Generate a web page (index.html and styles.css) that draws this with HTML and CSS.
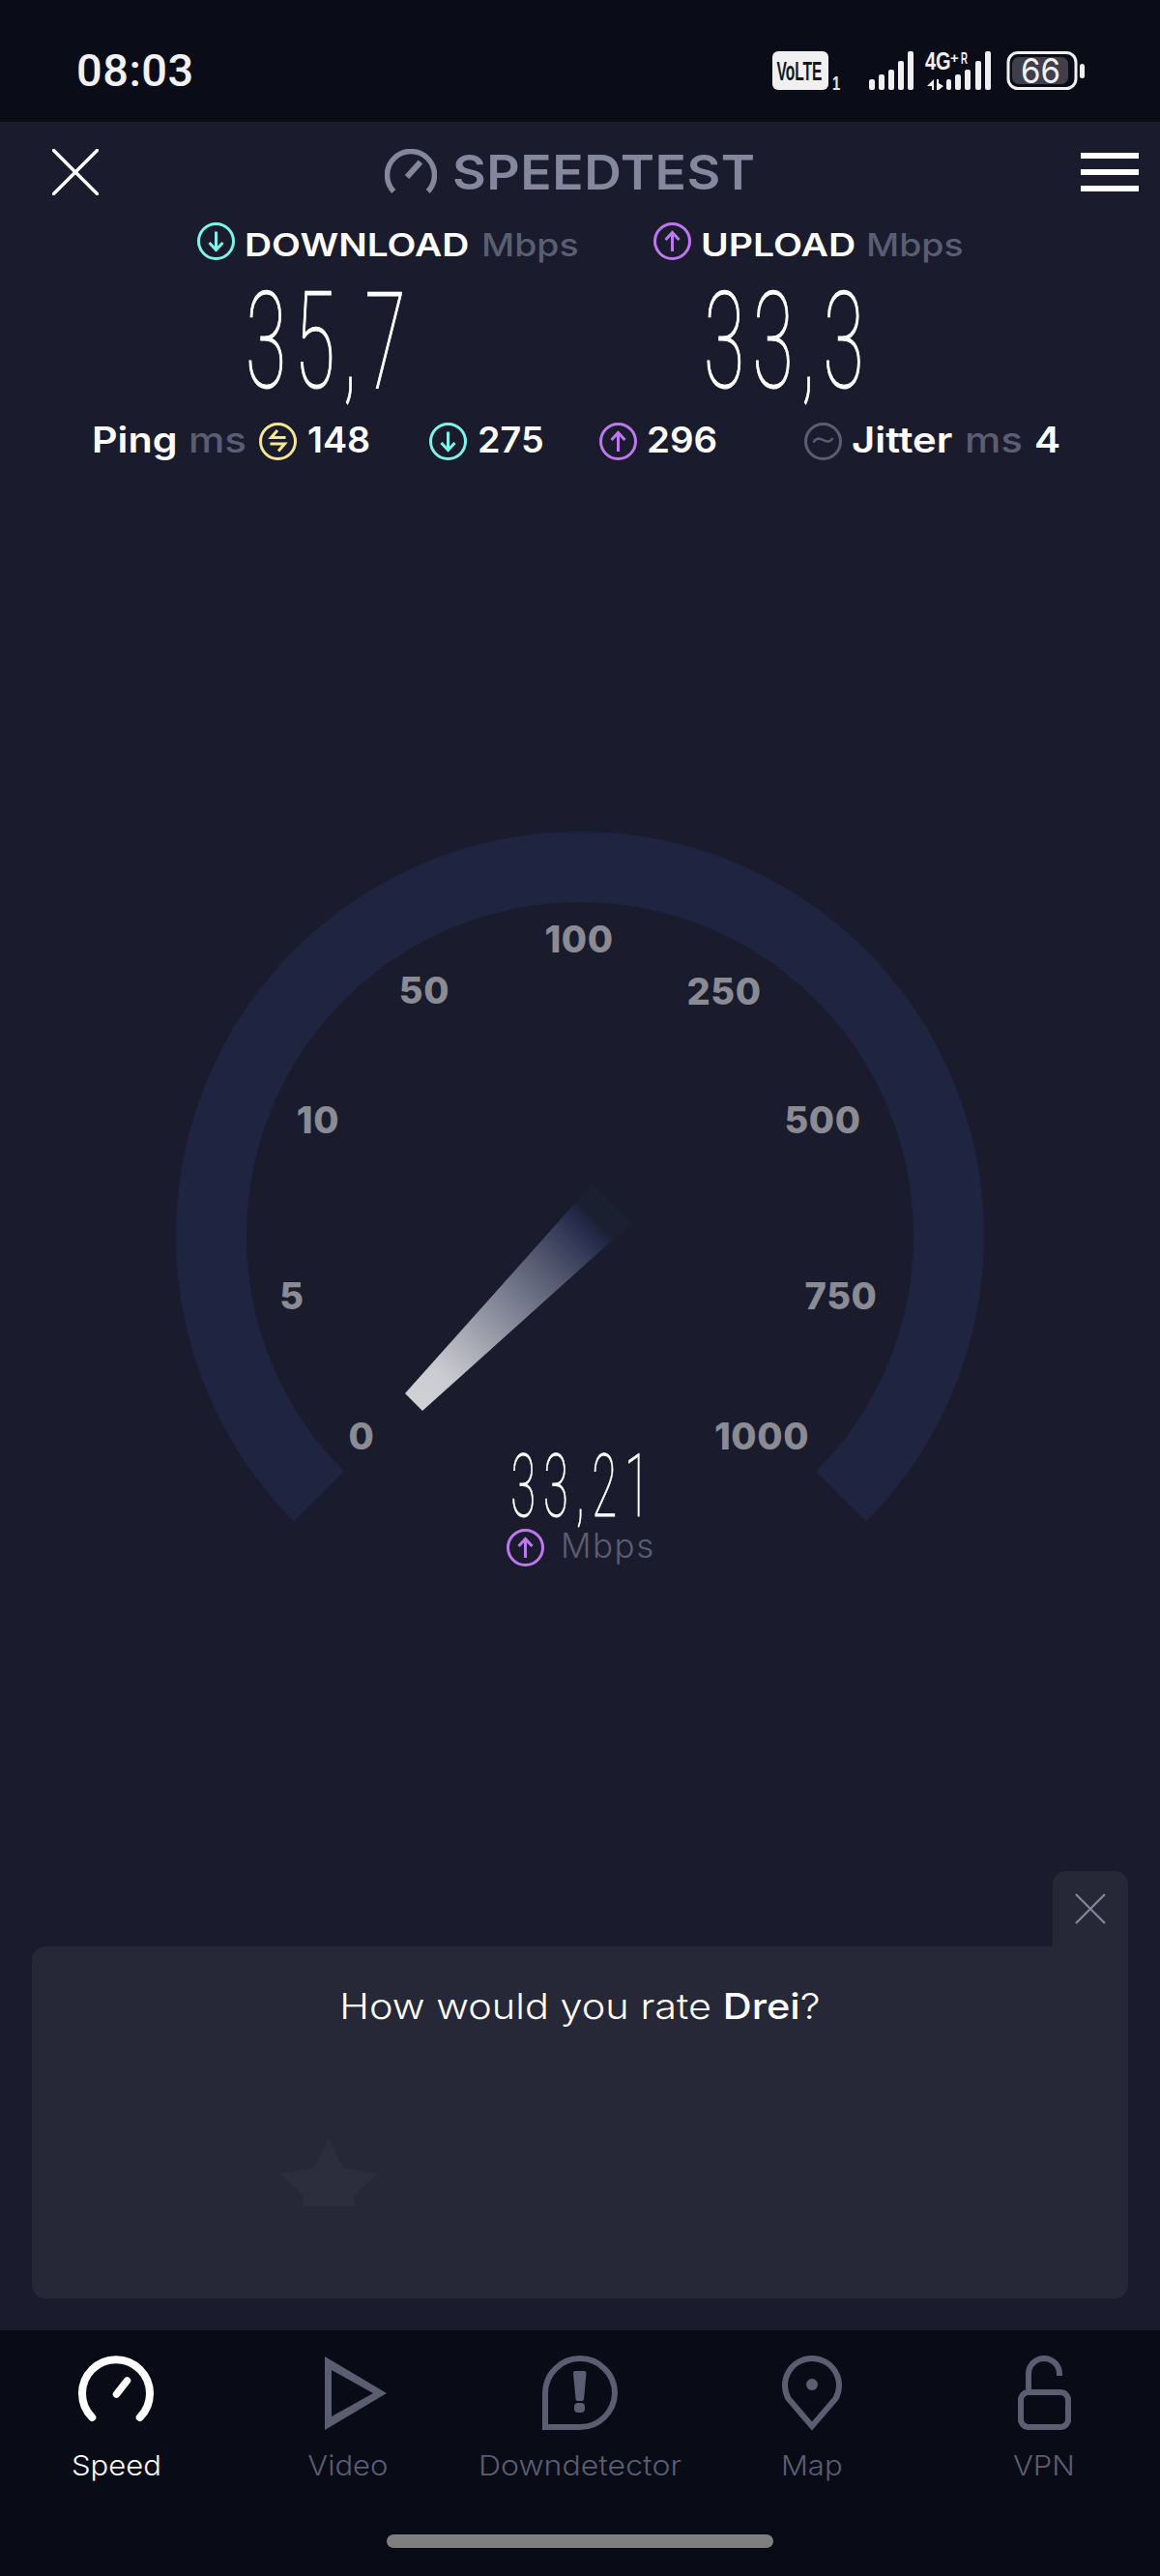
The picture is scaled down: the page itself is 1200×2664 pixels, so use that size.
FILE: index.html
```html
<!DOCTYPE html>
<html lang="en">
<head>
<meta charset="utf-8">
<title>Speedtest</title>
<link rel="stylesheet" href="styles.css">
</head>
<body>
<svg class="defs" width="0" height="0" aria-hidden="true">
  <symbol id="ring-down" viewBox="0 0 39 39"><circle cx="19.5" cy="19.5" r="18" fill="none" stroke="currentColor" stroke-width="3"/><path d="M19.5 9.5V28M12.5 21l7 7.5 7-7.5" fill="none" stroke="currentColor" stroke-width="3"/></symbol>
  <symbol id="ring-up" viewBox="0 0 39 39"><circle cx="19.5" cy="19.5" r="18" fill="none" stroke="currentColor" stroke-width="3"/><path d="M19.5 30V11M12.5 18l7-7.5 7 7.5" fill="none" stroke="currentColor" stroke-width="3"/></symbol>
  <symbol id="ring-ping" viewBox="0 0 39 39"><circle cx="19.5" cy="19.5" r="18" fill="none" stroke="currentColor" stroke-width="3"/><path d="M27.500 15.500H12.500L19 8M11.500 22H26.500L20 29.500" fill="none" stroke="currentColor" stroke-width="3"/></symbol>
  <symbol id="ring-jitter" viewBox="0 0 39 39"><circle cx="19.5" cy="19.5" r="18" fill="none" stroke="currentColor" stroke-width="3"/><path d="M9.500 20.500c2-4 6-5 10-2.500s8 2 10-2" fill="none" stroke="currentColor" stroke-width="2.500"/></symbol>
</svg>
<div class="screen">
  <header class="status">
    <span class="time">08:03</span>
    <div class="status-icons">
      <svg class="si-volte" width="72" height="64" viewBox="799 41 72 64">
        <rect x="799" y="53" width="58" height="40" rx="6" fill="#f0f0f2"/>
        <text class="volte-text" transform="translate(803.500 83) scale(.555 1)">VoLTE</text>
        <text class="sim-text" transform="translate(861 93) scale(.7 1)">1</text>
      </svg>
      <svg class="si-signal" width="46" height="64" viewBox="899 41 46 64">
        <rect x="899" y="82" width="6" height="11" rx="2" /><rect x="909" y="77" width="6" height="16" rx="2"/><rect x="919" y="72" width="6" height="21" rx="2"/><rect x="929" y="63" width="6" height="30" rx="2"/><rect x="939" y="53" width="6" height="40" rx="2"/>
      </svg>
      <svg class="si-signal2" width="70" height="64" viewBox="956 41 70 64">
        <text class="net-text" transform="translate(957 72) scale(.8 1)">4G</text>
        <text class="net-plus" x="983" y="65">+</text>
        <text class="net-small" transform="translate(994 66) scale(.6 1)">R</text>
        <path d="M966 82v11h-2v-4h-5zM969 82h2v4l5 3-5 4h-2z" fill="#f0f0f2"/>
        <rect x="979" y="82" width="5" height="11" rx="2"/><rect x="988" y="77" width="6" height="16" rx="2"/><rect x="998" y="72" width="6" height="21" rx="2"/><rect x="1009" y="63" width="6" height="30" rx="2"/><rect x="1019" y="53" width="6" height="40" rx="2"/>
      </svg>
      <svg class="si-batt" width="81" height="64" viewBox="1041 41 81 64">
        <rect x="1043" y="54.500" width="70" height="37" rx="10" fill="none" stroke="#f0f0f2" stroke-width="3"/>
        <rect x="1047" y="59" width="58" height="28" rx="7" fill="#3e3f4b"/>
        <text class="batt-text" transform="translate(1056 86) scale(.92 1)">66</text>
        <rect x="1117" y="66" width="5" height="15" rx="2.500" fill="#f0f0f2"/>
      </svg>
    </div>
  </header>

  <main class="main">
    <div class="topbar">
      <svg class="close-icon" width="48" height="48" viewBox="0 0 48 48"><path d="M1.500 1.500L46.500 46.500M46.500 1.500L1.500 46.500" stroke="#fff" stroke-width="3.400" stroke-linecap="round"/></svg>
      <div class="brand">
        <svg width="54" height="48" viewBox="0 0 54 48"><path d="M9.300 44A24.500 24.500 0 1 1 44.700 44" fill="none" stroke="#85889c" stroke-width="5.500"/><path d="M23 29L37 13.500" stroke="#85889c" stroke-width="6"/></svg>
        <span class="sx brand-name">SPEEDTEST</span>
      </div>
      <div class="burger"><i></i><i></i><i></i></div>
    </div>

    <div class="readouts">
      <section class="readout readout-down">
        <div class="readout-label"><svg class="ring cyan"><use href="#ring-down"/></svg><b class="sx w-download">DOWNLOAD</b><span class="sx unit w-unit">Mbps</span></div>
        <div class="big big-down">35,7</div>
      </section>
      <section class="readout readout-up">
        <div class="readout-label"><svg class="ring purple"><use href="#ring-up"/></svg><b class="sx w-upload">UPLOAD</b><span class="sx unit w-unit">Mbps</span></div>
        <div class="big big-up">33,3</div>
      </section>
    </div>

    <div class="stats">
      <div class="stat stat-ping"><b class="sx w-ping">Ping</b><span class="sx unit w-ms">ms</span><svg class="ring yellow"><use href="#ring-ping"/></svg><b class="sx w-148">148</b></div>
      <div class="stat stat-dl"><svg class="ring cyan"><use href="#ring-down"/></svg><b class="sx w-275">275</b></div>
      <div class="stat stat-ul"><svg class="ring purple"><use href="#ring-up"/></svg><b class="sx w-296">296</b></div>
      <div class="stat stat-jitter"><svg class="ring gray"><use href="#ring-jitter"/></svg><b class="sx w-jitter">Jitter</b><span class="sx unit w-ms">ms</span><b class="sx w-four">4</b></div>
    </div>

    <svg class="gauge" width="1200" height="790" viewBox="0 850 1200 790">
      <defs>
        <linearGradient id="needle" gradientUnits="userSpaceOnUse" x1="428" y1="1450" x2="633" y2="1245">
          <stop offset="0" stop-color="#d0d1d5"/>
          <stop offset="0.14" stop-color="#cbccd1"/>
          <stop offset="0.45" stop-color="#868999"/>
          <stop offset="0.7" stop-color="#4e536b"/>
          <stop offset="0.86" stop-color="#262d4d"/>
          <stop offset="0.9" stop-color="#1f2540"/>
          <stop offset="0.915" stop-color="#1a2030"/>
          <stop offset="1" stop-color="#1a2030"/>
        </linearGradient>
      </defs>
      <path d="M330.200 1547.800A381.500 381.500 0 1 1 869.800 1547.800" fill="none" stroke="#1f2540" stroke-width="73"/>
      <polygon points="419,1441 437,1459 653,1265 613,1224" fill="url(#needle)"/>
      <g class="tick">
        <text x="374" y="1499">0</text>
        <text x="302" y="1354">5</text>
        <text x="329" y="1172">10</text>
        <text x="439" y="1038">50</text>
        <text x="599" y="985">100</text>
        <text x="749" y="1039">250</text>
        <text x="851" y="1172">500</text>
        <text x="870" y="1354">750</text>
        <text x="788" y="1499">1000</text>
      </g>
      <text class="needle-value" transform="translate(604 1568) scale(.52 1)">33,21</text>
      <use href="#ring-up" class="purple" x="524" y="1581" width="39" height="39"/>
      <text class="needle-unit" x="580" y="1611">Mbps</text>
    </svg>

    <div class="rate-wrap">
      <div class="rate-tab">
        <svg width="32" height="32" viewBox="0 0 32 32"><path d="M1 1L31 31M31 1L1 31" stroke="#85889c" stroke-width="2.200"/></svg>
      </div>
      <section class="rate-card">
        <h2 class="rate-title"><span class="rate-text">How would you rate <b>Drei</b>?</span></h2>
        <svg class="star" width="102" height="72" viewBox="289 2209 102 72"><polygon points="340,2210 355,2240.700 390.700,2246.700 366,2270 367.300,2280.700 312.700,2280.700 314.300,2270 289.300,2246.700 325,2240.700" fill="#2c2e3d"/></svg>
      </section>
    </div>
  </main>

  <nav class="nav">
    <div class="tabs">
      <div class="tab tab-active">
        <svg width="80" height="78" viewBox="0 0 80 78"><path d="M15.300 64A35 35 0 1 1 64.700 64" fill="none" stroke="currentColor" stroke-width="8" stroke-linecap="round"/><path d="M40.500 40L51.500 26" stroke="currentColor" stroke-width="7.500" stroke-linecap="round"/></svg>
        <span>Speed</span>
      </div>
      <div class="tab">
        <svg width="80" height="78" viewBox="0 0 80 78"><path fill-rule="evenodd" fill="currentColor" d="M16 1L80 39L16 77ZM23 15V63L66 39Z"/></svg>
        <span>Video</span>
      </div>
      <div class="tab">
        <svg width="80" height="78" viewBox="0 0 80 78"><path d="M4 74V39A36 36 0 0 1 76 39A36 36 0 0 1 40 74Z" fill="none" stroke="currentColor" stroke-width="6"/><path d="M35 16h9.500a2 2 0 0 1 2 2L44 45a2 2 0 0 1-2 2h-4.500a2 2 0 0 1-2-2L33 18a2 2 0 0 1 2-2z" fill="currentColor"/><rect x="34" y="49" width="11" height="10" rx="4" fill="currentColor"/></svg>
        <span class="wider">Downdetector</span>
      </div>
      <div class="tab">
        <svg width="80" height="78" viewBox="0 0 80 78"><path d="M40 73L15.500 44.500A28 28 0 1 1 64.500 44.500Z" fill="none" stroke="currentColor" stroke-width="6"/><circle cx="40" cy="30" r="6" fill="currentColor"/></svg>
        <span>Map</span>
      </div>
      <div class="tab">
        <svg width="80" height="78" viewBox="0 0 80 78"><rect x="16" y="38" width="49" height="36" rx="8" fill="none" stroke="currentColor" stroke-width="6"/><path d="M24 38V19A16 16 0 0 1 56 19V21" fill="none" stroke="currentColor" stroke-width="6"/></svg>
        <span>VPN</span>
      </div>
    </div>
    <div class="home-bar"></div>
  </nav>
</div>
</body>
</html>
```

FILE: styles.css
```css
* { box-sizing: border-box; }
html, body { margin: 0; padding: 0; background: #1a1c2d; }
body { font-family: Inter, "Open Sans", "Liberation Sans", sans-serif; color: #fff; }
.defs { position: absolute; }
.screen { width: 1200px; height: 2664px; display: flex; flex-direction: column; overflow: hidden; }

/* status bar */
.status { height: 126px; background: #0a0c18; display: flex; align-items: flex-start; padding: 0 78px 0 79px; }
.time { font-family: Roboto, sans-serif; font-weight: 500; font-size: 47px; line-height: 56px; margin-top: 45px; color: #f1f1f3; letter-spacing: .5px; }
.status-icons { margin-left: auto; margin-top: 41px; display: flex; }
.status-icons svg { display: block; fill: #f0f0f2; }
.si-signal { margin-left: 28px; }
.si-signal2 { margin-left: 11px; }
.si-batt { margin-left: 15px; }
.volte-text { font: 700 28px "Liberation Sans", sans-serif; fill: #16171f; }
.sim-text { font: 700 21px "Liberation Sans", sans-serif; fill: #e6e6e8; }
.net-text { font: 700 25px "Liberation Sans", sans-serif; fill: #f0f0f2; }
.net-plus { font: 700 15px "Liberation Sans", sans-serif; fill: #f0f0f2; }
.net-small { font: 700 16px "Liberation Sans", sans-serif; fill: #f0f0f2; }
.batt-text { font: 400 36px Inter, sans-serif; fill: #f0f0f2; }

/* horizontally widened labels: box keeps the reference's width, glyphs stretch into it */
.sx { display: block; flex: none; white-space: nowrap; transform-origin: left center; }

/* main */
.main { flex: 1; display: flex; flex-direction: column; background: #1a1c2d; }
.topbar { height: 104px; display: flex; align-items: center; padding: 0 22px 0 54px; }
.close-icon { display: block; }
.brand { margin-left: 296px; display: flex; align-items: center; gap: 16px; }
.brand svg { display: block; }
.brand-name { width: 313px; font-size: 50px; line-height: 60px; font-weight: 600; color: #85889c; letter-spacing: 0.5px; transform: scaleX(1.07); }
.burger { margin-left: auto; width: 60px; height: 40px; display: flex; flex-direction: column; justify-content: space-between; }
.burger i { display: block; height: 6px; background: #fff; }

.readouts { display: flex; padding-left: 204px; }
.readout-down { width: 472px; }
.readout-label { display: flex; align-items: center; height: 39px; }
.readout-label b { margin: 7px 0 0 10px; font-size: 33px; line-height: 39px; font-weight: 600; }
.readout-label .unit { margin: 7px 0 0 11px; font-size: 33px; line-height: 39px; }
.w-download { width: 234px; transform: scaleX(1.18); }
.w-upload { width: 160px; transform: scaleX(1.186); }
.w-unit { width: 100px; transform: scaleX(1.135); }
.unit { color: #5b5e72; font-weight: 500; }
.ring { width: 39px; height: 39px; display: block; flex: none; }
.cyan { color: #7ff3e8; }
.purple { color: #bd78ee; }
.yellow { color: #f6e78e; }
.gray { color: #5b5e72; }

.big { font-family: Roboto, sans-serif; font-weight: 100; font-size: 140px; line-height: 140px; height: 130px; margin-top: 14px; letter-spacing: 15px; transform-origin: left center; transform: scale(.55, 1); -webkit-text-stroke: 1.2px #fff; white-space: nowrap; }
.big-down { margin-left: 50px; }
.big-up { margin-left: 52px; }

.stats { display: flex; margin-top: 24px; padding-left: 95px; height: 39px; }
.stat { display: flex; align-items: center; }
.stat b { font-size: 37px; line-height: 39px; font-weight: 600; margin-top: -4px; }
.stat .unit { font-size: 37px; line-height: 39px; margin: -4px 0 0 13px; }
.stat .ring { margin-right: 10px; }
.stat-ping .ring { margin-left: 15px; margin-right: 11px; }
.stat-dl { margin-left: 62px; }
.stat-dl .ring { margin-right: 11px; }
.stat-ul { margin-left: 59px; }
.stat-jitter { margin-left: 92px; }
.w-ping { width: 87px; transform: scaleX(1.115); }
.w-ms { width: 58px; transform: scaleX(1.137); }
.w-148 { width: 64px; transform: scaleX(1.02); }
.w-275 { width: 67px; transform: scaleX(1.02); }
.w-296 { width: 71px; transform: scaleX(1.04); }
.w-jitter { width: 104px; transform: scaleX(1.13); }
.stat b.w-four { width: 27px; margin-left: 14px; transform: scaleX(1.1); }

.gauge { display: block; margin-top: 374px; flex: none; }
.tick text { font-size: 38px; font-weight: 800; letter-spacing: .6px; fill: #8a8b95; text-anchor: middle; }
.needle-value { font-family: Roboto, sans-serif; font-weight: 100; font-size: 91px; letter-spacing: 15px; fill: #fff; stroke: #fff; stroke-width: .8px; text-anchor: middle; }
.needle-unit { font-size: 35px; font-weight: 300; letter-spacing: 1.5px; fill: #5b5e72; }

.rate-wrap { margin: 295px 33px 0; display: flex; flex-direction: column; align-items: flex-end; }
.rate-tab { width: 78px; height: 78px; background: #262838; border-radius: 14px 14px 0 0; display: flex; align-items: center; justify-content: center; }
.rate-tab svg { display: block; }
.rate-card { width: 100%; height: 364px; background: #262838; border-radius: 14px 0 14px 14px; display: flex; flex-direction: column; }
.rate-title { margin: 40px 0 0; text-align: center; font-size: 37px; line-height: 44px; font-weight: 300; }
.rate-text { display: inline-block; transform: scaleX(1.12); }
.rate-title b { font-weight: 500; }
.star { display: block; margin: 113px 0 0 256px; }

/* bottom nav */
.nav { height: 254px; background: #090b17; display: flex; flex-direction: column; padding-top: 26px; }
.tabs { display: grid; grid-template-columns: repeat(5, 240px); }
.tab { display: flex; flex-direction: column; align-items: center; color: #5b5e70; }
.tab svg { display: block; }
.tab span { margin-top: 18px; font-size: 29px; line-height: 36px; font-weight: 300; color: #5b5e70; transform: scaleX(1.07); }
.tab span.wider { transform: scaleX(1.105); }
.tab-active, .tab.tab-active span { color: #fff; }
.home-bar { width: 400px; height: 14px; margin: 53px auto 0; background: #7f7f7f; border-radius: 7px; }
```
